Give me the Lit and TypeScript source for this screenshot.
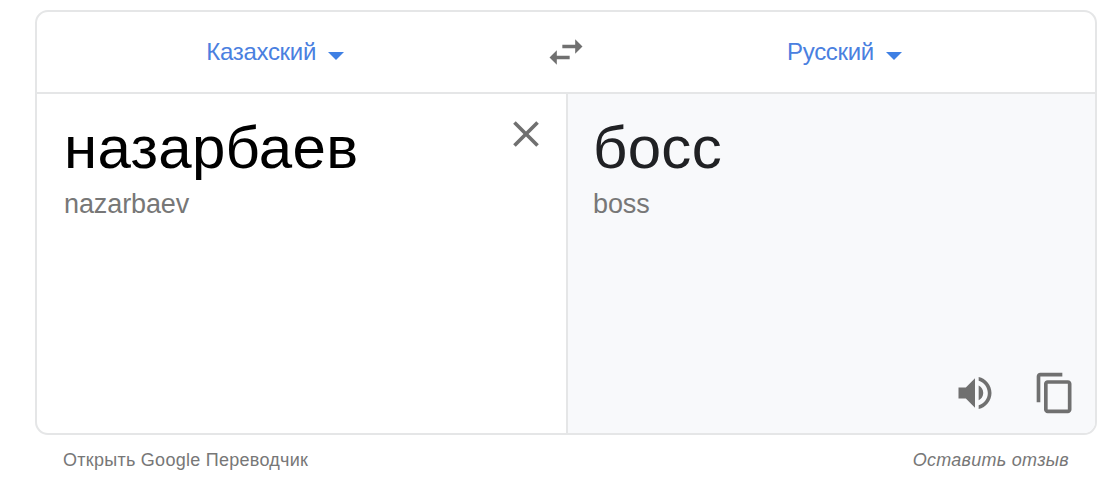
import { LitElement, html, css } from 'lit';
import { customElement, property } from 'lit/decorators.js';

const icons: Record<string, string> = {
  swap: 'M6.99 11L3 15l3.99 4v-3H14v-2H6.99v-3zM21 9l-3.99-4v3H10v2h7.01v3L21 9z',
  close: 'M19 6.41L17.59 5 12 10.59 6.41 5 5 6.41 10.59 12 5 17.59 6.41 19 12 13.41 17.59 19 19 17.59 13.41 12z',
  volume: 'M3 9v6h4l5 5V4L7 9H3zm13.5 3c0-1.77-1.02-3.29-2.5-4.03v8.05c1.48-.73 2.5-2.25 2.5-4.02zM14 3.23v2.06c2.89.86 5 3.54 5 6.71s-2.11 5.85-5 6.71v2.06c4.01-.91 7-4.49 7-8.77s-2.99-7.86-7-8.77z',
  copy: 'M16 1H4c-1.1 0-2 .9-2 2v14h2V3h12V1zm3 4H8c-1.1 0-2 .9-2 2v14c0 1.1.9 2 2 2h11c1.1 0 2-.9 2-2V7c0-1.1-.9-2-2-2zm0 16H8V7h11v14z',
};

@customElement('translate-icon')
export class TranslateIcon extends LitElement {
  @property() name = '';

  static styles = css`
    :host {
      display: block;
      width: 44px;
      height: 44px;
    }

    svg {
      display: block;
      width: 100%;
      height: 100%;
      fill: #707070;
    }
  `;

  render() {
    return html`<svg viewBox="0 0 24 24"><path d=${icons[this.name]}></path></svg>`;
  }
}

@customElement('language-picker')
export class LanguagePicker extends LitElement {
  @property() language = '';

  static styles = css`
    :host {
      display: flex;
      align-items: center;
      gap: 12px;
      color: #4a80e0;
      font-size: 24px;
      line-height: 28px;
      white-space: nowrap;
    }

    .label {
      letter-spacing: -0.3px;
    }

    .arrow {
      width: 16px;
      height: 8px;
      margin-top: 7px;
      fill: #3f80e4;
    }
  `;

  render() {
    return html`
      <span class="label">${this.language}</span>
      <svg class="arrow" viewBox="0 0 16 8"><path d="M0 0h16L8 8z"></path></svg>
    `;
  }
}

@customElement('app-root')
export class AppRoot extends LitElement {
  static styles = css`
    :host {
      display: block;
      box-sizing: border-box;
      height: 478px;
      padding: 10px 23px 0 35px;
      background: #fff;
      font-family: "Liberation Sans", Arial, sans-serif;
      overflow: hidden;
    }

    .card {
      box-sizing: border-box;
      display: grid;
      grid-template-rows: 82px 1fr;
      height: 425px;
      border: 2px solid #e5e6e7;
      border-radius: 13px;
      overflow: hidden;
    }

    .languages {
      display: grid;
      grid-template-columns: 1fr 44px 1fr;
      align-items: center;
      border-bottom: 2px solid #e5e6e7;
    }

    .source-language {
      justify-self: end;
      margin-right: 200px;
    }

    .target-language {
      margin-left: 199px;
    }

    .panes {
      display: grid;
      grid-template-columns: 531px 1fr;
    }

    .pane {
      box-sizing: border-box;
      display: flex;
      justify-content: space-between;
      padding: 18px 18px 18px 27px;
    }

    .source {
      border-right: 2px solid #e5e6e7;
      color: #000;
    }

    .target {
      flex-direction: column;
      padding-left: 25px;
      background: #f8f9fb;
      color: #202124;
    }

    .word {
      font-size: 60px;
      line-height: 72px;
      letter-spacing: 0.3px;
    }

    .translit {
      margin-top: 4px;
      color: #777;
      font-size: 27px;
      line-height: 32px;
      letter-spacing: -0.1px;
    }

    .actions {
      display: flex;
      justify-content: flex-end;
      gap: 36px;
    }

    .footer {
      display: flex;
      justify-content: space-between;
      padding: 14px 28px 0;
      color: #777;
      font-size: 18px;
      line-height: 22px;
      letter-spacing: 0.27px;
    }

    .feedback {
      font-style: italic;
    }
  `;

  render() {
    return html`
      <div class="card">
        <div class="languages">
          <language-picker class="source-language" language="Казахский"></language-picker>
          <translate-icon name="swap"></translate-icon>
          <language-picker class="target-language" language="Русский"></language-picker>
        </div>
        <div class="panes">
          <div class="pane source">
            <div class="text">
              <div class="word">назарбаев</div>
              <div class="translit">nazarbaev</div>
            </div>
            <translate-icon name="close"></translate-icon>
          </div>
          <div class="pane target">
            <div class="text">
              <div class="word">босс</div>
              <div class="translit">boss</div>
            </div>
            <div class="actions">
              <translate-icon name="volume"></translate-icon>
              <translate-icon name="copy"></translate-icon>
            </div>
          </div>
        </div>
      </div>
      <div class="footer">
        <span>Открыть Google Переводчик</span>
        <span class="feedback">Оставить отзыв</span>
      </div>
    `;
  }
}
